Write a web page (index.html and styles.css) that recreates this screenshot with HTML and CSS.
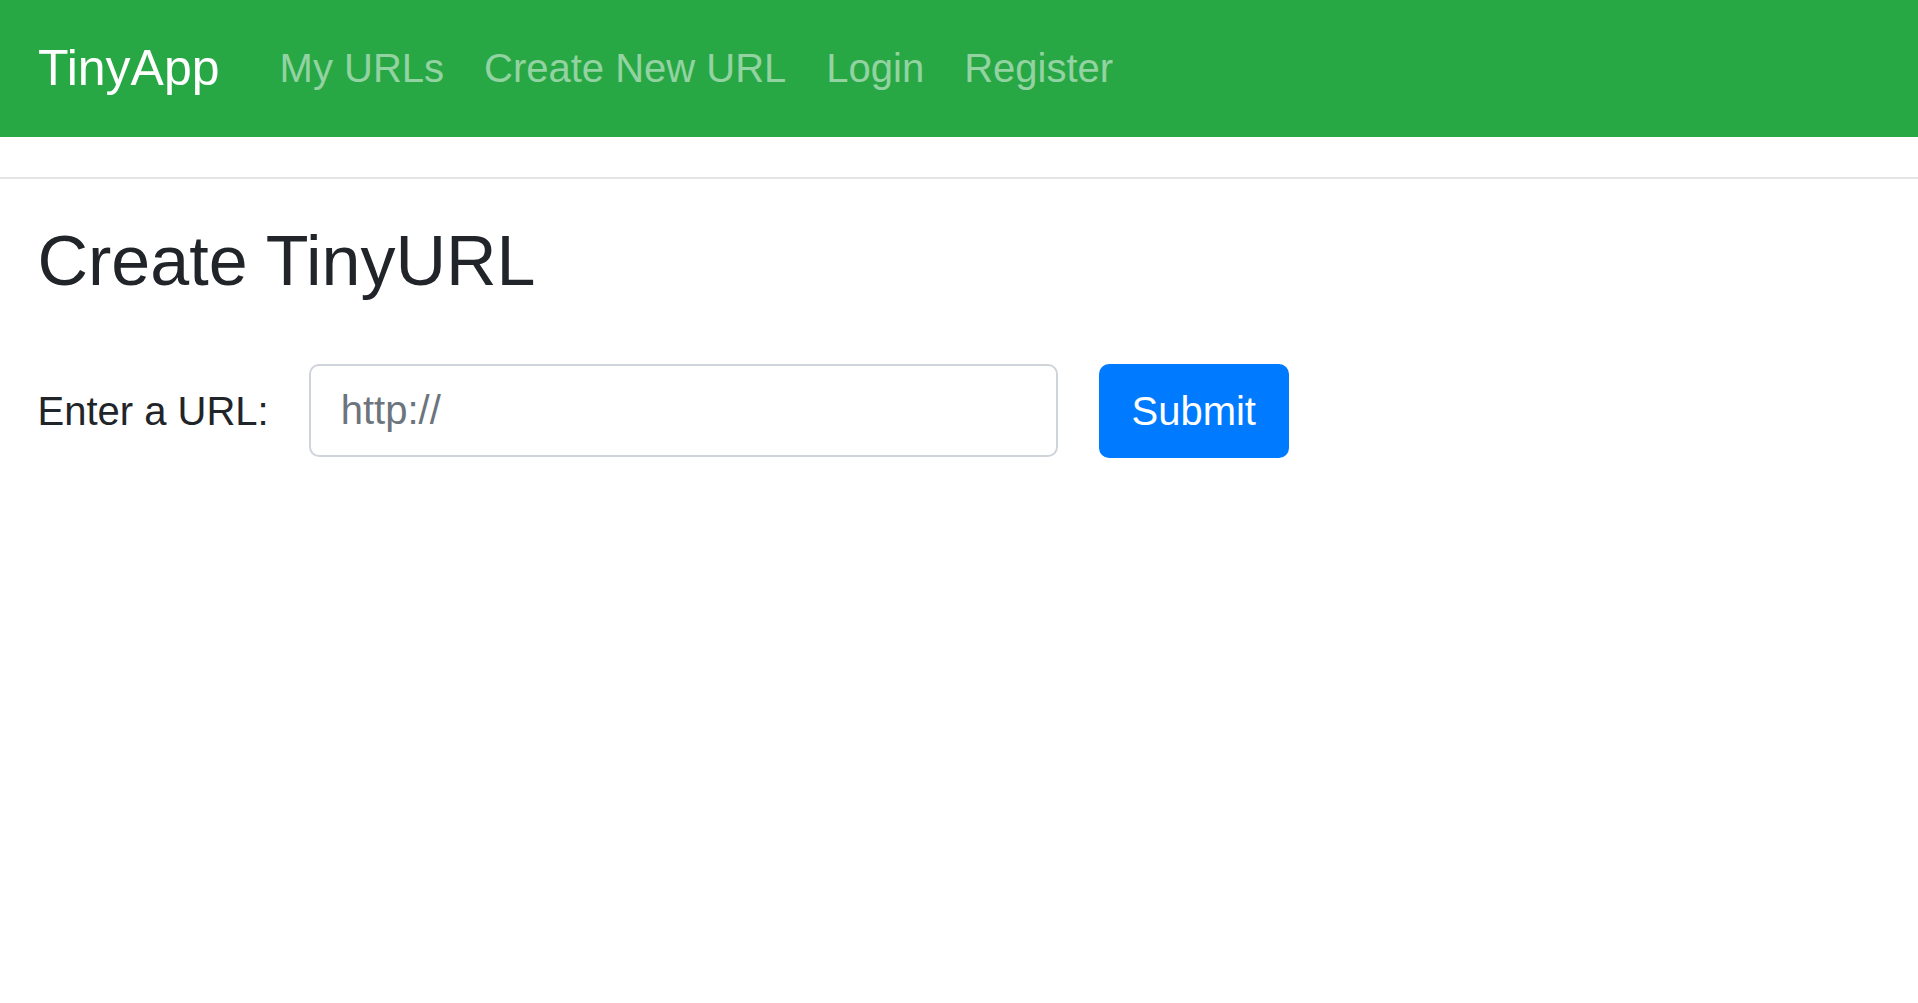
FILE: index.html
```html
<!DOCTYPE html>
<html lang="en">
<head>
<meta charset="utf-8">
<title>TinyApp</title>
<link rel="stylesheet" href="styles.css">
</head>
<body>
<nav class="navbar">
  <a class="brand" href="#">TinyApp</a>
  <div class="nav-links">
    <a class="nav-link" href="#">My URLs</a>
    <a class="nav-link" href="#">Create New URL</a>
    <a class="nav-link" href="#">Login</a>
    <a class="nav-link" href="#">Register</a>
  </div>
</nav>
<hr class="divider">
<main class="content">
  <h1 class="title">Create TinyURL</h1>
  <form class="url-form">
    <label class="url-label" for="longURL">Enter a URL:</label>
    <input class="url-input" id="longURL" type="text" placeholder="http://">
    <button class="submit-btn" type="button">Submit</button>
  </form>
</main>
</body>
</html>
```

FILE: styles.css
```css
html, body {
  margin: 0;
  padding: 0;
  background: #fff;
}

body {
  font-family: "Liberation Sans", Arial, sans-serif;
  color: #212529;
}

.navbar {
  display: flex;
  align-items: center;
  height: 137px;
  padding: 0 38px;
  background: #28a745;
  box-sizing: border-box;
}

.brand {
  font-size: 50px;
  line-height: 75px;
  color: #fff;
  text-decoration: none;
  margin-right: 40px;
  margin-top: 0;
}

.nav-links {
  display: flex;
  align-items: center;
  margin-top: -2px;
}

.nav-link {
  font-size: 40px;
  line-height: 60px;
  padding: 0 20px;
  color: rgba(255, 255, 255, 0.5);
  text-decoration: none;
}

.divider {
  margin: 40px 0;
  height: 0;
  border: 0;
  border-top: 2.5px solid rgba(0, 0, 0, 0.1);
}

.content {
  padding: 0 37.5px;
}

.title {
  font-size: 70px;
  font-weight: 400;
  line-height: 84px;
  margin: 0 0 20px;
  color: #212529;
}

.url-form {
  display: flex;
  align-items: center;
  margin-top: 60.5px;
}

.url-label {
  font-size: 40px;
  line-height: 60px;
  margin-right: 40px;
  color: #212529;
}

.url-input {
  box-sizing: border-box;
  width: 749px;
  height: 93px;
  padding: 0 30px;
  border: 2.5px solid #ced4da;
  border-radius: 10px;
  font-family: "Liberation Sans", Arial, sans-serif;
  font-size: 40px;
  color: #495057;
  outline: none;
}

.url-input::placeholder {
  color: #6c757d;
  opacity: 1;
}

.submit-btn {
  box-sizing: border-box;
  margin-left: 41px;
  width: 190px;
  height: 94px;
  padding: 0;
  border: 2.5px solid #007bff;
  border-radius: 10px;
  background: #007bff;
  color: #fff;
  font-family: "Liberation Sans", Arial, sans-serif;
  font-size: 40px;
  line-height: 60px;
  cursor: pointer;
}
```
